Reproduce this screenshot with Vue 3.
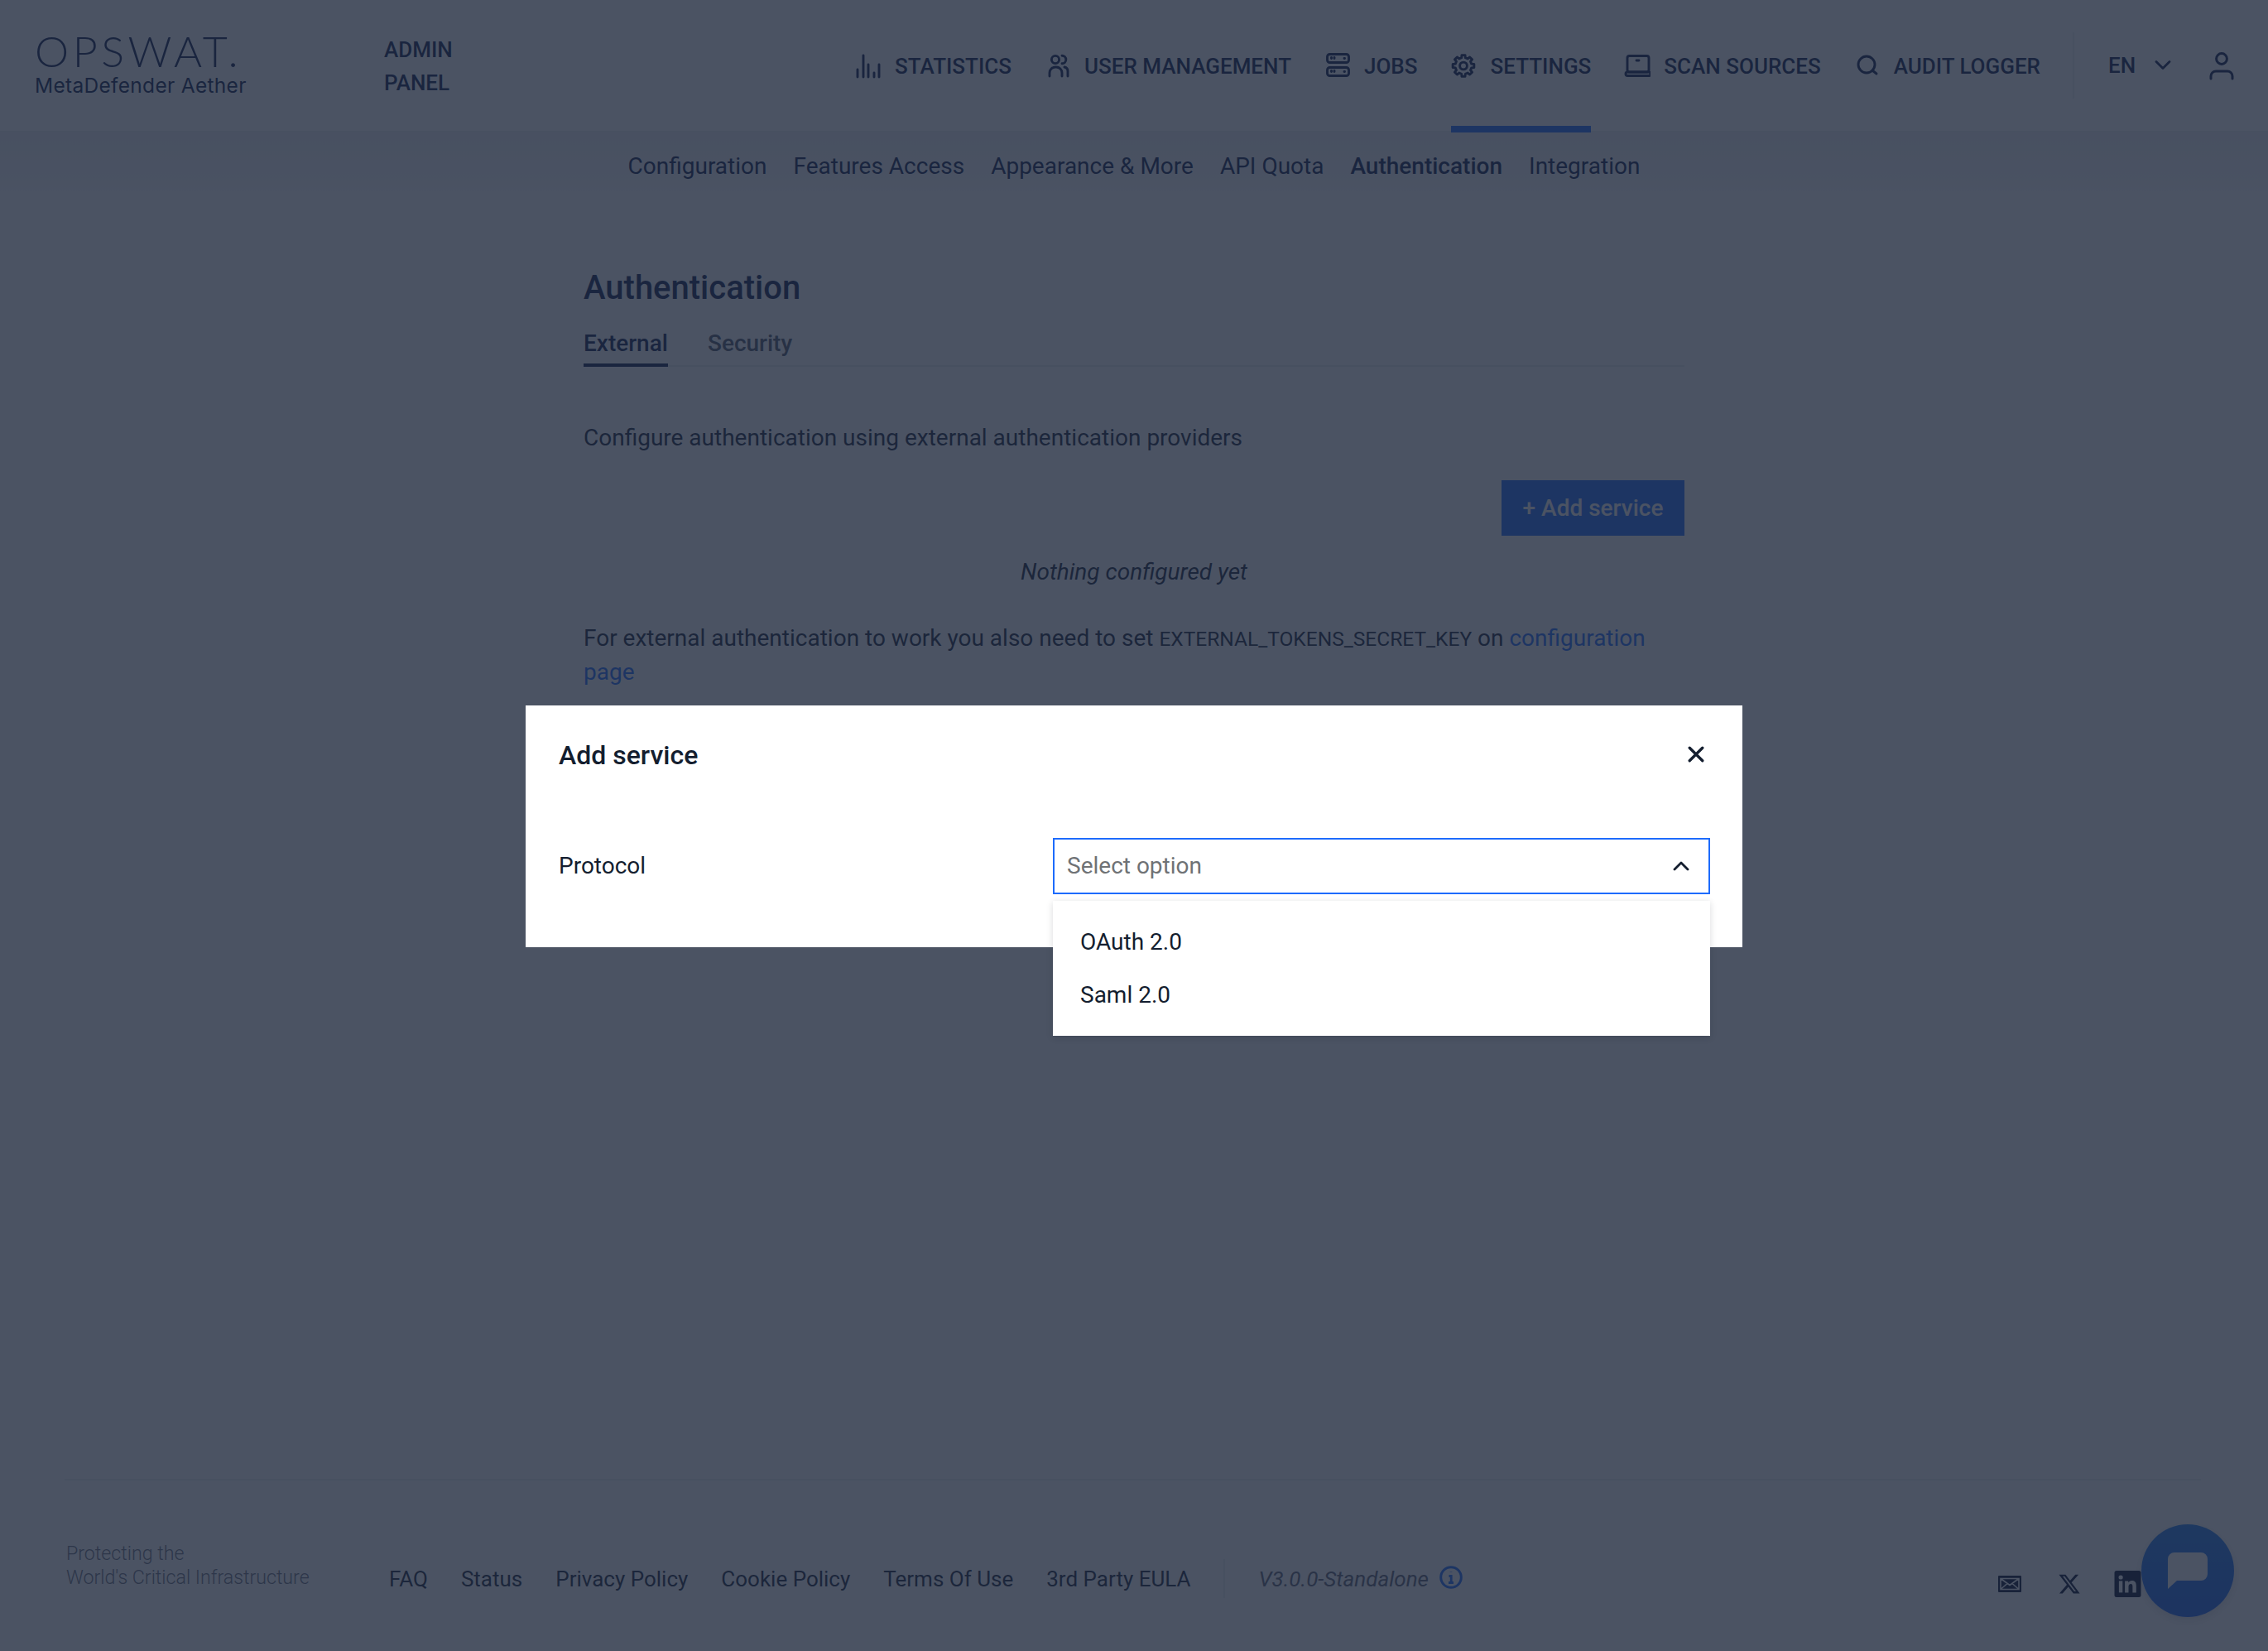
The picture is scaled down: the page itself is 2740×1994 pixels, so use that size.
<script setup>
const navItems = [
  { key: 'stats', label: 'STATISTICS' },
  { key: 'users', label: 'USER MANAGEMENT' },
  { key: 'jobs', label: 'JOBS' },
  { key: 'gear', label: 'SETTINGS', active: true },
  { key: 'laptop', label: 'SCAN SOURCES' },
  { key: 'search', label: 'AUDIT LOGGER' },
]
const subItems = ['Configuration', 'Features Access', 'Appearance & More', 'API Quota', 'Authentication', 'Integration']
const footLinks = ['FAQ', 'Status', 'Privacy Policy', 'Cookie Policy', 'Terms Of Use', '3rd Party EULA']

function gearPath(cx, cy, rOut, rIn, teeth) {
  const pts = []
  const step = (Math.PI * 2) / teeth
  for (let i = 0; i < teeth; i++) {
    const a = i * step - Math.PI / 2
    const w = step * 0.2
    const g = step * 0.3
    const seq = [
      [rIn, a - g], [rOut, a - w], [rOut, a + w], [rIn, a + g],
    ]
    seq.forEach(([r, t]) => pts.push((cx + r * Math.cos(t)).toFixed(2) + ' ' + (cy + r * Math.sin(t)).toFixed(2)))
  }
  return 'M' + pts.join('L') + 'Z'
}
const gear = gearPath(15, 15.5, 13, 10, 8)
</script>

<template>
  <div class="page">
    <header class="top">
      <div class="brand">
        <div class="logo-word">OPSWAT.</div>
        <div class="logo-sub">MetaDefender Aether</div>
      </div>
      <div class="panel">ADMIN<br />PANEL</div>
      <nav class="nav">
        <a v-for="item in navItems" :key="item.key" class="nav-item" :class="{ on: item.active }">
          <svg class="ico" viewBox="0 0 32 32" fill="none" stroke="currentColor" stroke-width="2.9" stroke-linecap="round" stroke-linejoin="round">
            <template v-if="item.key === 'stats'">
              <path d="M3 20v9M10 3v26M16 14v15M23 24v5M29 14v15" />
            </template>
            <template v-else-if="item.key === 'users'">
              <circle cx="13" cy="8" r="4.6" />
              <path d="M21 3.2a4.8 4.8 0 0 1 0 9.6" />
              <path d="M6 28v-4a7 7 0 0 1 7-7h1a7 7 0 0 1 7 7v4" />
              <path d="M24 17a5 5 0 0 1 4 5v6" />
            </template>
            <template v-else-if="item.key === 'jobs'">
              <rect x="3.5" y="1.5" width="26" height="10" rx="3" />
              <rect x="3.5" y="17.5" width="26" height="10" rx="3" />
              <path d="M8.5 5.500v1M12 5.500v1M8.500 21.500v1M12 21.500v1M24 6.500h.5M24 22.500h.5" />
            </template>
            <template v-else-if="item.key === 'gear'">
              <path :d="gear" />
              <circle cx="15" cy="15.5" r="4.4" />
            </template>
            <template v-else-if="item.key === 'laptop'">
              <rect x="4" y="3.5" width="26" height="19.5" rx="2.5" />
              <rect x="2" y="23" width="30" height="4.5" rx="2.2" />
              <path d="M15 9h3" />
            </template>
            <template v-else>
              <circle cx="15" cy="14" r="10" />
              <path d="M22 21l5 4" />
            </template>
          </svg>
          <span>{{ item.label }}</span>
        </a>
      </nav>
      <div class="tools">
        <span class="lang">EN</span>
        <svg class="chev" viewBox="0 0 20 12" fill="none" stroke="currentColor" stroke-width="2.8" stroke-linecap="round" stroke-linejoin="round"><path d="M2 1.500l8 8 8-8" /></svg>
        <svg class="person" viewBox="0 0 30 34" fill="none" stroke="currentColor" stroke-width="3" stroke-linecap="round"><circle cx="15" cy="8" r="6.400" /><path d="M2 32v-3a6 6 0 0 1 6-6h14a6 6 0 0 1 6 6v3" /></svg>
      </div>
    </header>

    <div class="subnav">
      <a v-for="s in subItems" :key="s" :class="{ cur: s === 'Authentication' }">{{ s }}</a>
    </div>

    <main class="content">
      <h1>Authentication</h1>
      <div class="tabs">
        <span class="tab cur">External</span>
        <span class="tab">Security</span>
      </div>
      <p class="desc">Configure authentication using external authentication providers</p>
      <div class="actions"><button class="add">+ Add service</button></div>
      <p class="empty">Nothing configured yet</p>
      <p class="note">For external authentication to work you also need to set <span class="code">EXTERNAL_TOKENS_SECRET_KEY</span> on <a>configuration page</a></p>
    </main>

    <footer class="foot">
      <div class="tagline">Protecting the<br />World's Critical Infrastructure</div>
      <div class="links"><a v-for="l in footLinks" :key="l">{{ l }}</a></div>
      <div class="version">
        <span>V3.0.0-Standalone</span>
        <svg class="info" viewBox="0 0 28 28" fill="none" stroke="currentColor"><circle cx="14" cy="14" r="12.300" stroke-width="3" /><path d="M14 7.500v.6M11.500 12.500H14.200V20M11 20.500h6" stroke-width="2.800" /></svg>
      </div>
      <div class="social">
        <svg class="s-mail" viewBox="0 0 28 20"><rect width="28" height="20" rx="1" fill="#000c30" /><path d="M3 3.500h22v13H3zM3 3.500l11 8 11-8M3 16.500l8-7M25 16.500l-8-7" fill="none" stroke="#fff" stroke-width="1.600" /></svg>
        <svg class="s-x" viewBox="0 0 24 24"><path fill="#000c30" d="M18.244 2.25h3.308l-7.227 8.26 8.502 11.24H16.17l-5.214-6.817L4.99 21.75H1.68l7.73-8.835L1.254 2.25H8.08l4.713 6.231zm-1.161 17.52h1.833L7.084 4.126H5.117z" /></svg>
        <svg class="s-in" viewBox="0 0 32 32"><rect width="32" height="32" rx="2.500" fill="#000c30" /><circle cx="7.600" cy="8" r="2.600" fill="#fff" /><rect x="5.400" y="12.400" width="4.400" height="14" fill="#fff" /><path fill="#fff" d="M12.600 12.400h4.200v2c.8-1.400 2.300-2.400 4.300-2.400 4 0 5.200 2.500 5.200 6.200v8.200h-4.400v-7.400c0-1.900-.5-3.100-2.200-3.100-1.800 0-2.700 1.300-2.700 3.200v7.300h-4.400z" /></svg>
      </div>
    </footer>

    <button class="chat" aria-label="Chat">
      <svg viewBox="0 0 48 44"><path fill="#fff" d="M8 0h32a8 8 0 0 1 8 8v18a8 8 0 0 1-8 8H11L0 44V8a8 8 0 0 1 8-8z" /></svg>
    </button>

    <div class="overlay">
      <section class="modal">
        <div class="m-head">
          <h2>Add service</h2>
          <svg class="close" viewBox="0 0 18 18" fill="none" stroke="currentColor" stroke-width="3" stroke-linecap="round"><path d="M2 2l14 14M16 2L2 16" /></svg>
        </div>
        <div class="m-row">
          <label>Protocol</label>
          <div class="select-wrap">
            <div class="select">
              <span>Select option</span>
              <svg class="up" viewBox="0 0 20 12" fill="none" stroke="currentColor" stroke-width="2.800" stroke-linecap="round" stroke-linejoin="round"><path d="M2 10l8-8 8 8" /></svg>
            </div>
            <ul class="menu">
              <li>OAuth 2.0</li>
              <li>Saml 2.0</li>
            </ul>
          </div>
        </div>
      </section>
    </div>
  </div>
</template>

<style>
html, body { margin: 0; background: #fff; }
</style>

<style scoped>
.page {
  position: relative;
  width: 2740px;
  height: 1994px;
  overflow: hidden;
  display: flex;
  flex-direction: column;
  background: #fff;
  color: #0a1a4c;
  font-family: Roboto, "Liberation Sans", sans-serif;
  font-size: 28px;
  line-height: 40px;
}
.top {
  height: 160px;
  box-sizing: border-box;
  flex: none;
  display: flex;
  align-items: center;
  border-bottom: 2px solid #eceef1;
  padding-left: 42px;
}
.brand { width: 422px; flex: none; }
.logo-word {
  font-family: Lato, sans-serif;
  font-weight: 300;
  font-size: 52px;
  line-height: 46px;
  letter-spacing: 4.5px;
  margin-top: -2px;
}
.logo-sub {
  font-family: Inter, sans-serif;
  font-weight: 400;
  font-size: 24.5px;
  line-height: 32px;
  letter-spacing: .3px;
  margin-top: 3px;
}
.panel { font-weight: 500; font-size: 26px; line-height: 40px; width: 106px; flex: none; margin-top: 2px; }
.nav {
  margin-left: auto;
  display: flex;
  align-items: stretch;
  gap: 40px;
  height: 158px;
}
.nav-item {
  display: flex;
  align-items: center;
  gap: 16px;
  font-weight: 500;
  font-size: 26px;
  border-bottom: 8px solid transparent;
  box-sizing: border-box;
  height: 160px;
  padding-top: 8px;
}
.nav-item.on { border-bottom-color: #1d6bfc; }
.ico { width: 32px; height: 32px; flex: none; }
.tools {
  margin-left: 39px;
  border-left: 2px solid #eceef1;
  height: 80px;
  display: flex;
  align-items: center;
  padding-left: 41px;
  padding-right: 41px;
  font-weight: 500;
  font-size: 26px;
}
.lang { width: 56px; }
.chev { width: 20px; height: 12px; }
.person { width: 30px; height: 34px; margin-left: 46px; margin-top: 2px; }

.subnav {
  height: 80px;
  flex: none;
  padding-top: 2px;
  box-sizing: border-box;
  background: linear-gradient(#eef0f3, #f6f7f9 70%, #fff);
  display: flex;
  justify-content: center;
  align-items: center;
  gap: 32px;
}
.subnav .cur { font-weight: 500; }

.content { width: 1330px; margin: 0 auto; flex: 1; padding-top: 84px; box-sizing: border-box; }
h1 { margin: 0; font-size: 40px; line-height: 48px; font-weight: 500; }
.tabs {
  margin-top: 23px;
  display: flex;
  gap: 48px;
  border-bottom: 2px solid #eceef1;
  height: 48px;
  box-sizing: border-box;
}
.tab { color: #4c5468; height: 48px; box-sizing: border-box; font-weight: 500; }
.tab.cur { color: #0a1a4c; border-bottom: 4px solid #0a1a4c; }
.desc { margin: 66px 0 0; color: #141e3a; }
.actions { margin-top: 31px; display: flex; justify-content: flex-end; }
.add {
  height: 67px;
  width: 221px;
  border: 0;
  background: #1d6bfc;
  color: #fff;
  font: 500 28px Roboto, sans-serif;
  padding: 0;
}
.empty { margin: 24px 0 0; text-align: center; font-style: italic; color: #141e3a; }
.note { margin: 40px 0 0; color: #141e3a; }
.code { font-size: 24.5px; }
.note a { color: #1d6bfc; }

.foot {
  flex: none;
  height: 208px;
  box-sizing: border-box;
  margin: 0 81px 0 78px;
  border-top: 2px solid #eceef1;
  padding-top: 74px;
  display: flex;
  align-items: flex-start;
}
.tagline { width: 392px; flex: none; box-sizing: border-box; padding-left: 2px; font-size: 23.2px; line-height: 29px; color: #6a7080; font-weight: 300; }
.links { display: flex; gap: 40px; margin-top: 25px; font-size: 26px; color: #141e3a; }
.version {
  margin: 21px 0 0 40px;
  height: 47px;
  padding-left: 40px;
  border-left: 2px solid #eceef1;
  display: flex;
  align-items: center;
  gap: 13px;
  font-size: 26px;
  font-style: italic;
  color: #5a6072;
}
.info { width: 28px; height: 28px; color: #1d6bfc; margin-top: -4px; }
.social { margin: 35px 72px 0 auto; display: flex; align-items: center; height: 32px; }
.s-mail { width: 28px; height: 20px; }
.s-x { width: 28px; height: 28px; margin-left: 44px; }
.s-in { width: 33px; height: 32px; margin-left: 40px; }

.chat {
  position: absolute;
  left: 2587px;
  top: 1841px;
  width: 112px;
  height: 112px;
  border: 0;
  border-radius: 50%;
  background: linear-gradient(#1f7cf0, #1b62f0);
  padding: 0;
  display: flex;
  align-items: center;
  justify-content: center;
  box-shadow: 0 4px 12px rgba(0,0,0,.12);
}
.chat svg { width: 48px; height: 44px; }

.overlay {
  position: absolute;
  inset: 0;
  background: rgba(30, 40, 60, .8);
  display: flex;
  flex-direction: column;
  align-items: center;
  padding-top: 852px;
}
.modal {
  width: 1470px;
  height: 292px;
  background: #fff;
  color: #141e2f;
  padding: 0 39px 0 40px;
  box-sizing: border-box;
}
.m-head {
  height: 120px;
  display: flex;
  justify-content: space-between;
  align-items: center;
}
h2 { margin: 0; font-size: 32px; line-height: 40px; font-weight: 500; }
.close { width: 20px; height: 20px; margin-right: 7px; margin-top: -2px; }
.m-row { margin-top: 40px; display: flex; align-items: flex-start; }
label { width: 597px; flex: none; line-height: 68px; }
.select-wrap { position: relative; width: 794px; }
.select {
  height: 68px;
  box-sizing: border-box;
  border: 2px solid #1d6bfc;
  display: flex;
  align-items: center;
  justify-content: space-between;
  padding: 0 23px 0 15px;
  color: #6f7275;
}
.up { width: 20px; height: 12px; color: #141e2f; }
.menu {
  position: absolute;
  left: 0;
  right: 0;
  top: 76px;
  margin: 0;
  padding: 18px 0 0;
  height: 163px;
  box-sizing: border-box;
  list-style: none;
  background: #fff;
  color: #141e2f;
  box-shadow: 0 2px 8px rgba(17, 24, 39, .16);
}
.menu li { height: 64px; line-height: 64px; padding-left: 33px; }
</style>
